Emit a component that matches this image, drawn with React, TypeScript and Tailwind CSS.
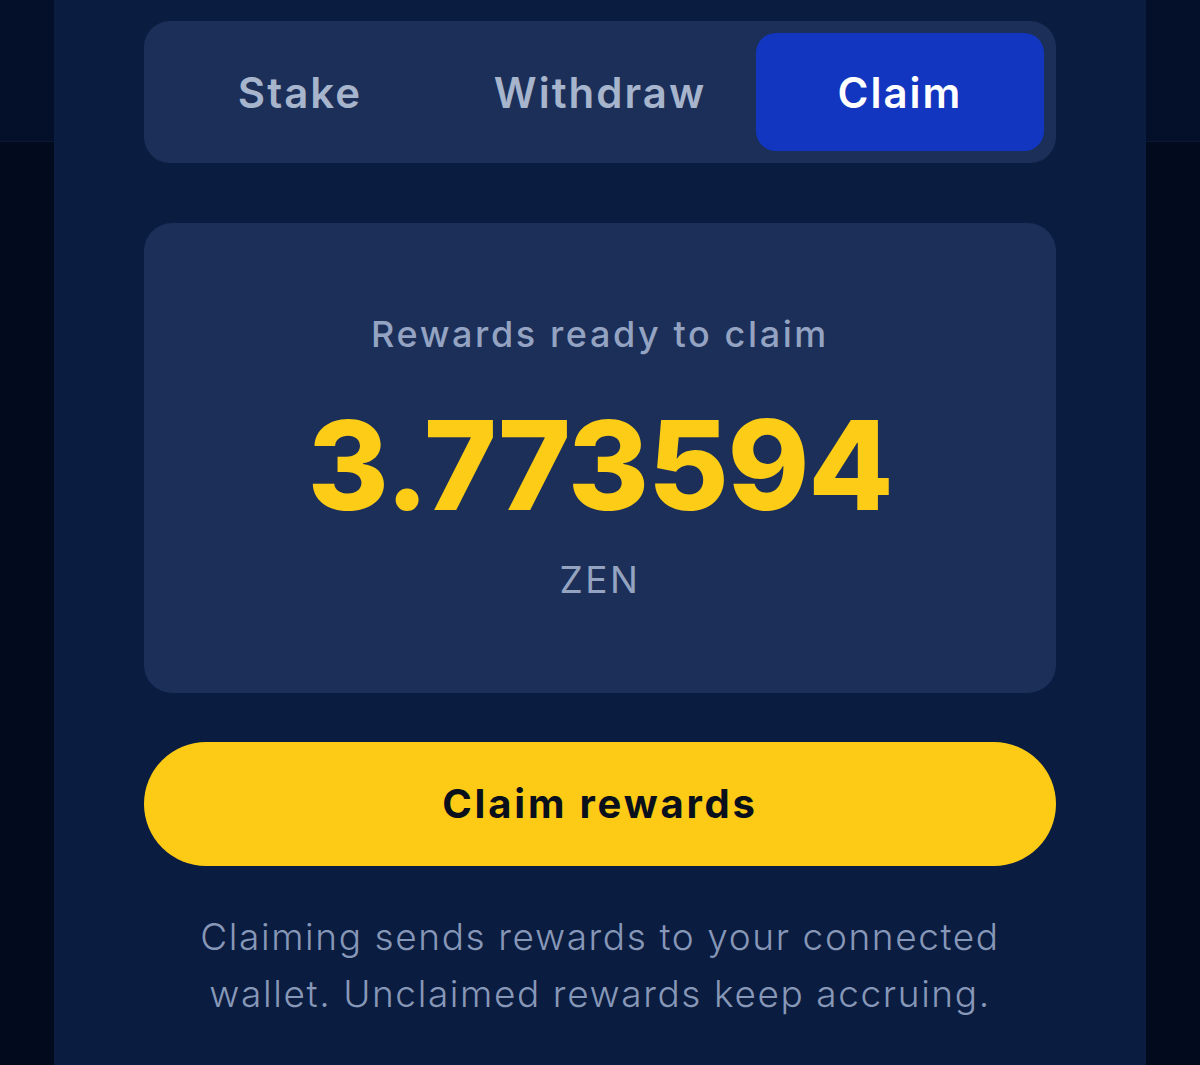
import React, { useState } from "react";

const tabs = ["Stake", "Withdraw", "Claim"];

const SideStrip: React.FC = () => (
  <div className="flex flex-col">
    <div className="h-[142px] bg-[#041029] border-b border-[#0a1733]" />
    <div className="flex-1 bg-[#020a1d]" />
  </div>
);

export default function App() {
  const [active, setActive] = useState("Claim");

  return (
    <div
      className="grid grid-cols-[54px_1092px_54px] h-[1065px] overflow-hidden bg-[#020a1d]"
      style={{ fontFamily: "Inter, 'Noto Sans', sans-serif" }}
    >
      <SideStrip />

      <main className="bg-[#0a1c3f] px-[90px] pt-[21px] flex flex-col">
        <div className="grid grid-cols-3 gap-3 p-3 rounded-[26px] bg-[#1b2f59]">
          {tabs.map((t) => (
            <button
              key={t}
              onClick={() => setActive(t)}
              className={`h-[118px] rounded-[20px] text-[42px] font-semibold tracking-[2px] ${
                active === t ? "bg-[#1236c0] text-white" : "text-[#a6b4cc]"
              }`}
            >
              {t}
            </button>
          ))}
        </div>

        <div className="mt-[60px] h-[470px] rounded-[28px] bg-[#1b2f59] flex flex-col items-center pt-[93px]">
          <p className="text-[36px] font-medium text-[#93a3c1] leading-none tracking-[2.6px]">
            Rewards ready to claim
          </p>
          <p className="mt-[51px] text-[124px] font-extrabold text-[#fccc16] leading-none tracking-[-0.01em]">
            3.773594
          </p>
          <p className="mt-[34px] text-[37px] font-normal text-[#94a3bf] leading-none tracking-[2.5px]">
            ZEN
          </p>
        </div>

        <button className="mt-[49px] h-[124px] rounded-full bg-[#fdca16] text-[40px] font-bold text-[#0a0f1c] tracking-[2.8px]">
          Claim rewards
        </button>

        <p className="mt-[42px] text-center text-[37px] font-light leading-[57px] text-[#8797b8] tracking-[1.6px]">
          Claiming sends rewards to your connected
          <br />
          wallet. Unclaimed rewards keep accruing.
        </p>
      </main>

      <SideStrip />
    </div>
  );
}
